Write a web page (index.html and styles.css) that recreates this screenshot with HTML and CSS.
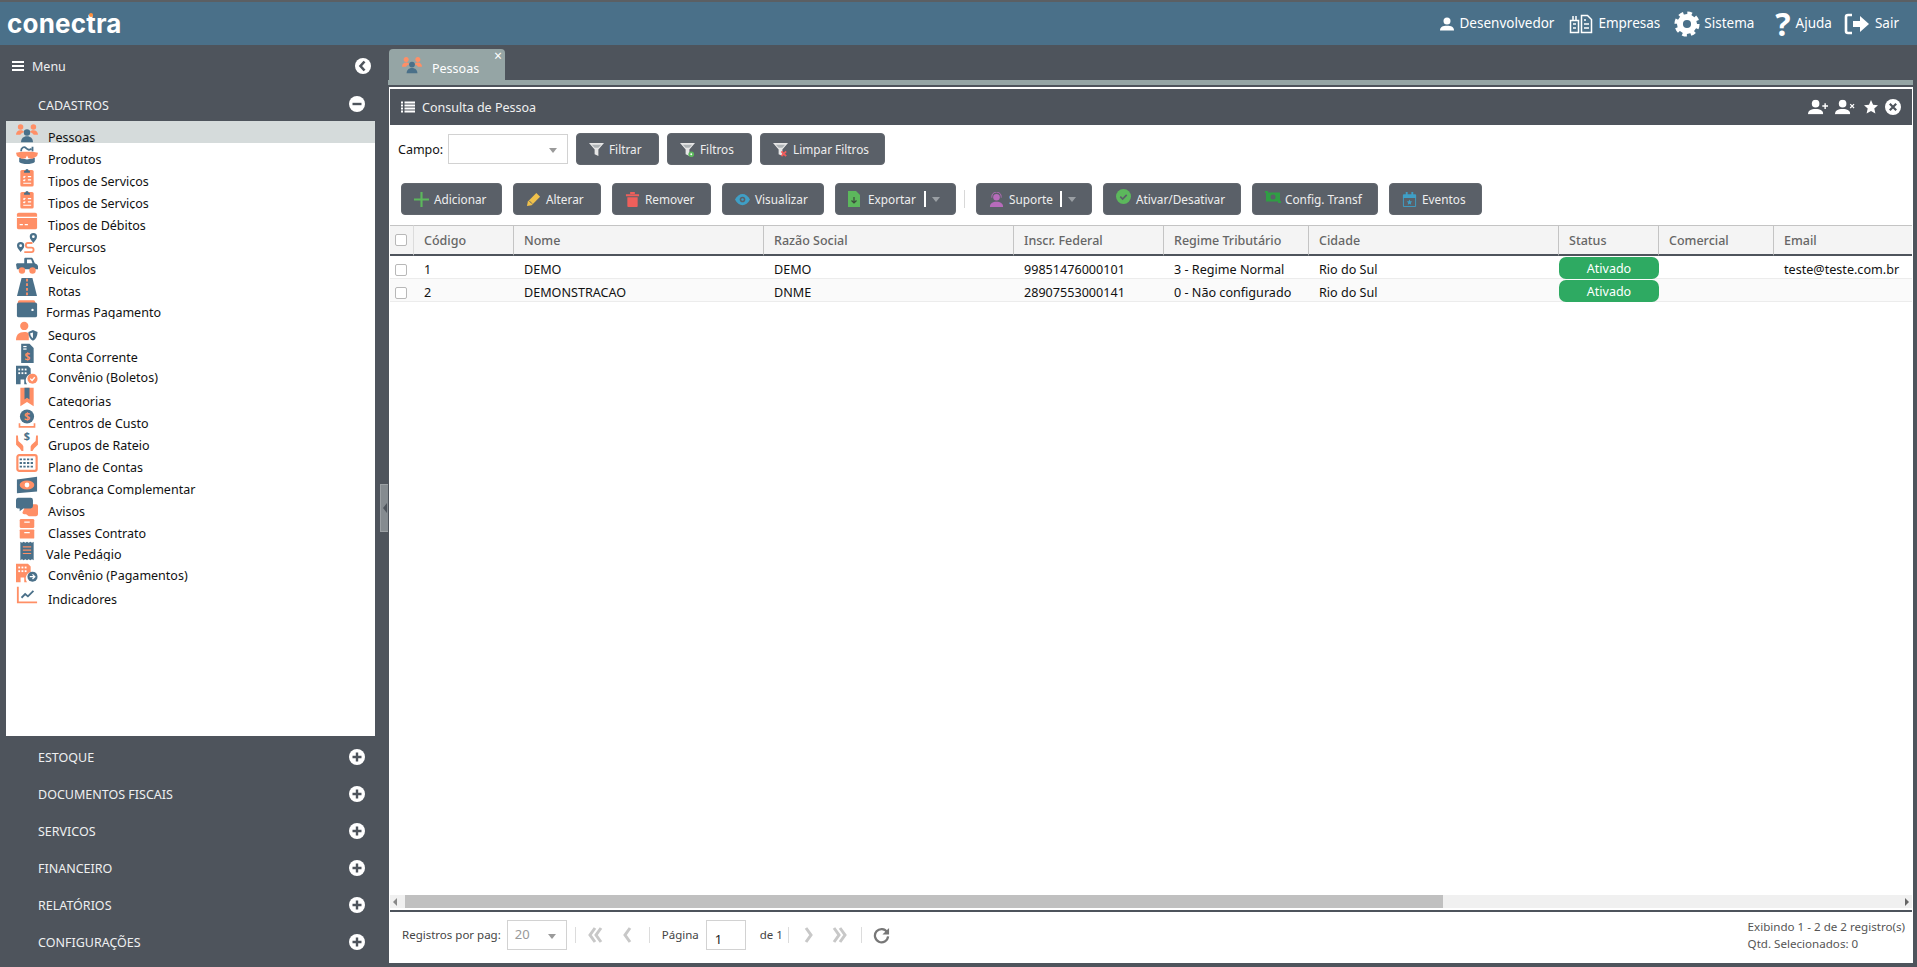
FILE: index.html
```html
<!DOCTYPE html>
<html lang="pt-BR">
<head>
<meta charset="utf-8">
<title>Conectra - Pessoas</title>
<link rel="stylesheet" href="styles.css">
</head>
<body>
<svg class="sprite" xmlns="http://www.w3.org/2000/svg">
  <symbol id="i-people" viewBox="0 0 24 20"><circle class="o" cx="5" cy="3.5" r="3"/><circle class="o" cx="19" cy="3.5" r="3"/><path class="o" d="M0 12c0-3 2-5 5-5 2 0 3 .6 4 2-2 .8-3.500 1.500-4.200 3zM24 12c0-3-2-5-5-5-2 0-3 .6-4 2 2 .8 3.500 1.500 4.200 3z"/><circle class="b" cx="12" cy="9.500" r="3.500"/><path class="b" d="M5.500 20c0-4 2.500-6.500 6.500-6.500s6.500 2.500 6.500 6.500z"/></symbol>
  <symbol id="i-box" viewBox="0 0 24 20"><path class="b" d="M3.500 13l8.500 2 8.500-2v4.500C17 20.500 7 20.500 3.500 17.500z"/><path class="o" d="M0 7.500l6-1h12l6 1-1 3.500-5 3-4.500-.5-1.500-3-1.500 3-4.500.5-5-3z"/><path class="st-b" d="M5.500 6C5.500 1.500 9 .5 11 2.500s4 2.500 6 .5"/><path class="st-b" d="M18 1v5"/></symbol>
  <symbol id="i-clip" viewBox="0 0 24 24"><rect class="o" x="4" y="3.500" width="16" height="20" rx="2"/><path class="b" d="M8.500 7V4.500h1.500a2 2 0 014 0h1.500V7z"/><path class="st-w" d="M7.500 11.500l1 1 1.500-1.500M13 11.500h4M7.500 15.500l1 1 1.500-1.500M13 15.500h4M7.500 19.500h9.500"/></symbol>
  <symbol id="i-card" viewBox="0 0 24 20"><rect class="o" x="1" y="1" width="22" height="18" rx="2"/><path class="st-w" d="M1 6h22M4 14h3.500M9.500 14H13"/></symbol>
  <symbol id="i-route" viewBox="0 0 24 22"><path class="b" d="M19 0a4 4 0 014 4c0 2.500-2.500 4.500-4 7-1.500-2.500-4-4.500-4-7a4 4 0 014-4z"/><circle class="w" cx="19" cy="4" r="1.500"/><path class="b" d="M5 10a4 4 0 014 4c0 2.500-2.500 4.500-4 7-1.500-2.500-4-4.500-4-7a4 4 0 014-4z"/><circle class="w" cx="5" cy="14" r="1.500"/><path class="st-o" d="M18 11h-5c-3 0-3 5 0 5h4c3 0 3 5 0 5H9"/></symbol>
  <symbol id="i-car" viewBox="0 0 24 20"><path class="b" d="M0 9.500l1-1.500h8V3.500C9 2.500 9.500 2 10.500 2h6c1 0 1.500.5 2 1.500L20.500 8l2.500 1.500 1 1.500v3.500H1z"/><path class="w" d="M12 4h4.500l1.500 4h-6z"/><circle class="o" cx="6.500" cy="16" r="3.500"/><circle class="o" cx="18" cy="16" r="3.500"/></symbol>
  <symbol id="i-road" viewBox="0 0 24 22"><path class="b" d="M6 1h12l5 20H1z"/><path class="st-o dash" d="M12 2v19"/></symbol>
  <symbol id="i-wallet" viewBox="0 0 24 20"><path class="o" d="M2 4V2.500A2 2 0 014 .5h15a2 2 0 012 2V4z"/><rect class="b" x="1" y="3" width="22" height="16" rx="2"/><circle class="w" cx="18" cy="11" r="1.300"/></symbol>
  <symbol id="i-shield" viewBox="0 0 24 20"><circle class="o" cx="9" cy="4.500" r="4.500"/><path class="o" d="M0 20c0-6 3-9 9-9 2 0 3.500.4 5 1.500V20z"/><path class="b" d="M13.500 11l5-2 5 2c0 5-2 8-5 9.500-3-1.500-5-4.500-5-9.500z"/><path class="w" d="M18.500 11.500v6.500c-1.500-1-3-3-3-5.500z"/></symbol>
  <symbol id="i-doc" viewBox="0 0 24 24"><path class="b" d="M5 1h10l5 5v18H5z"/><rect class="w" x="7.500" y="3.500" width="4" height="1.500"/><rect class="w" x="7.500" y="6.500" width="4" height="1.500"/><text class="glyph-o" x="12.500" y="20" text-anchor="middle">$</text></symbol>
  <symbol id="i-bldg-check" viewBox="0 0 24 20"><path class="b" d="M0 0h13l3 3v6a7 7 0 00-4 11H9v-5H5v5H0z"/><g class="w"><rect x="2.500" y="3" width="2" height="2"/><rect x="6" y="3" width="2" height="2"/><rect x="9.500" y="3" width="2" height="2"/><rect x="2.500" y="7" width="2" height="2"/><rect x="6" y="7" width="2" height="2"/><rect x="9.500" y="7" width="2" height="2"/></g><circle class="o" cx="18" cy="14" r="5.500"/><path class="st-w" d="M15.500 14l2 2 3-3.500"/></symbol>
  <symbol id="i-bookmark" viewBox="0 0 24 24"><path class="o" d="M4 1h16v22l-8-5-8 5z"/><path class="b" d="M9 1h6v14l-3-2-3 2z"/></symbol>
  <symbol id="i-coin" viewBox="0 0 24 24"><circle class="b" cx="12" cy="9" r="8.500"/><text class="glyph-o big" x="12" y="13.500" text-anchor="middle">$</text><path class="st-o" d="M3 17v4.500h18V17"/></symbol>
  <symbol id="i-hands" viewBox="0 0 24 22"><path class="o" d="M0 5l2 0 .5 6 4.500 4 1 2v5H6l-2-3-4-4zM24 5h-2l-.5 6-4.500 4-1 2v5h2l2-3 4-4z"/><text class="glyph-b" x="12" y="10" text-anchor="middle">$</text></symbol>
  <symbol id="i-abacus" viewBox="0 0 24 20"><rect class="st-o wide" x="1.500" y="1.500" width="21" height="17" rx="2"/><path class="st-b dots" d="M4 6h16M4 10h16M4 14h16"/></symbol>
  <symbol id="i-bill" viewBox="0 0 24 20"><path class="b" d="M1 4l22-3v16L1 19z"/><ellipse class="o" cx="12" cy="10" rx="8" ry="5"/><circle class="w" cx="12" cy="10" r="2.600"/></symbol>
  <symbol id="i-chat" viewBox="0 0 24 20"><path class="o" d="M11 7h11a2 2 0 012 2v9a2 2 0 01-2 2h-8l-3-2H9a2 2 0 01-2-2z"/><path class="b" d="M2 0h14a2.500 2.500 0 012.500 2.500V9a2.500 2.500 0 01-2.500 2.500H8L4 14.500v-3H2A2 2 0 010 9V2.500A2.500 2.500 0 012 0z"/></symbol>
  <symbol id="i-cabinet" viewBox="0 0 24 22"><rect class="o" x="4" y="0" width="16" height="10" rx="1.500"/><rect class="o" x="4" y="11.500" width="16" height="10" rx="1"/><path class="st-w" d="M9 3.500h6M9 15h6"/></symbol>
  <symbol id="i-receipt" viewBox="0 0 24 24"><path class="b" d="M4 1l2 1 2-1 2 1 2-1 2 1 2-1 2 1 2-1V23l-2-1-2 1-2-1-2 1-2-1-2 1-2-1-2 1z"/><path class="st-w thin" d="M7 7h10M7 11h10M7 15h10"/></symbol>
  <symbol id="i-bldg-arrow" viewBox="0 0 24 20"><path class="o" d="M0 0h13l3 3v6a7 7 0 00-4 11H9v-5H5v5H0z"/><g class="w"><rect x="2.500" y="3" width="2" height="2"/><rect x="6" y="3" width="2" height="2"/><rect x="9.500" y="3" width="2" height="2"/><rect x="2.500" y="7" width="2" height="2"/><rect x="6" y="7" width="2" height="2"/><rect x="9.500" y="7" width="2" height="2"/></g><circle class="b" cx="18" cy="14" r="5.500"/><path class="st-w" d="M15 14h5M18 11.500l2.500 2.500-2.500 2.500"/></symbol>
  <symbol id="i-chart" viewBox="0 0 24 20"><path class="st-o" d="M2 1v17h21"/><path class="st-b" d="M6 13l4-4 3 2.500 6-6"/></symbol>
  <symbol id="i-plus" viewBox="0 0 16 16"><circle cx="8" cy="8" r="8" fill="#fff"/><path d="M8 3.500v9M3.500 8h9" stroke="#4e545c" stroke-width="2.400"/></symbol>
  <symbol id="i-user" viewBox="0 0 16 16"><circle cx="8" cy="4.500" r="4" fill="currentColor"/><path d="M0 15.500c0-4 3-5.500 8-5.500s8 1.500 8 5.500z" fill="currentColor"/></symbol>
  <symbol id="i-funnel" viewBox="0 0 16 16"><path d="M0 1h16L10 8v7l-4-2V8z" fill="#e6e6e6"/><path d="M3 3h10l-3 3H6z" fill="#aeb3b6"/></symbol>
  <symbol id="i-first" viewBox="0 0 15 16"><path class="st-chev" d="M7 1L2 8l5 7M13 1L8 8l5 7"/></symbol>
  <symbol id="i-prev" viewBox="0 0 10 16"><path class="st-chev" d="M8 1L3 8l5 7"/></symbol>
  <symbol id="i-next" viewBox="0 0 10 16"><path class="st-chev" d="M2 1l5 7-5 7"/></symbol>
  <symbol id="i-last" viewBox="0 0 15 16"><path class="st-chev" d="M2 1l5 7-5 7M8 1l5 7-5 7"/></symbol>
</svg>

<header class="topbar">
  <div class="logo">conectra<span class="logo-dot"></span></div>
  <nav class="topnav">
    <a class="topnav-item"><svg class="ti ti-user"><use href="#i-user"/></svg>Desenvolvedor</a>
    <a class="topnav-item topnav-emp"><svg class="ti ti-bldg" viewBox="0 0 24 20"><path class="line-w" d="M1.500 6.500h8v12h-8zM4 6.500V2M7 6.500V2M12.500 18.500V1.500h6l4 4v13zM4 10h3M4 14h3M15 6h2M15 10h5M15 14h5"/></svg>Empresas</a>
    <a class="topnav-item topnav-sys"><svg class="ti ti-gear" viewBox="0 0 24 24"><circle cx="12" cy="12" r="6.500" class="gear-a"/><circle cx="12" cy="12" r="9.600" class="gear-b"/></svg>Sistema</a>
    <a class="topnav-item topnav-help"><span class="qmark">?</span>Ajuda</a>
    <a class="topnav-item topnav-exit"><svg class="ti ti-exit" viewBox="0 0 26 22"><path class="line-w2" d="M8 2H4a2 2 0 00-2 2v14a2 2 0 002 2h4"/><path d="M9 8h7V3l9 8-9 8v-5H9z" fill="#fff"/></svg>Sair</a>
  </nav>
</header>

<div class="app">
  <aside class="sidebar">
    <div class="side-head">
      <svg class="hamb" viewBox="0 0 12 10"><path d="M0 1h12M0 5h12M0 9h12" stroke="#fff" stroke-width="1.800"/></svg>
      <span class="side-title">Menu</span>
      <svg class="circ circ-back" viewBox="0 0 16 16"><circle cx="8" cy="8" r="8" fill="#fff"/><path d="M9.500 3.500L5.500 8l4 4.500" fill="none" stroke="#4e545c" stroke-width="2.600"/></svg>
    </div>
    <div class="sec sec-open"><span>CADASTROS</span><svg class="circ" viewBox="0 0 16 16"><circle cx="8" cy="8" r="8" fill="#fff"/><path d="M3.500 8h9" stroke="#4e545c" stroke-width="2.400"/></svg></div>
    <ul class="menu">
      <li class="mi mi-active"><svg class="mic"><use href="#i-people"/></svg><span>Pessoas</span></li>
      <li class="mi"><svg class="mic"><use href="#i-box"/></svg><span>Produtos</span></li>
      <li class="mi"><svg class="mic"><use href="#i-clip"/></svg><span>Tipos de Serviços</span></li>
      <li class="mi"><svg class="mic"><use href="#i-clip"/></svg><span>Tipos de Serviços</span></li>
      <li class="mi"><svg class="mic"><use href="#i-card"/></svg><span>Tipos de Débitos</span></li>
      <li class="mi"><svg class="mic"><use href="#i-route"/></svg><span>Percursos</span></li>
      <li class="mi"><svg class="mic"><use href="#i-car"/></svg><span>Veiculos</span></li>
      <li class="mi"><svg class="mic"><use href="#i-road"/></svg><span>Rotas</span></li>
      <li class="mi mi-mid"><svg class="mic"><use href="#i-wallet"/></svg><span class="mt-left">Formas Pagamento</span></li>
      <li class="mi"><svg class="mic"><use href="#i-shield"/></svg><span>Seguros</span></li>
      <li class="mi"><svg class="mic"><use href="#i-doc"/></svg><span>Conta Corrente</span></li>
      <li class="mi mi-up"><svg class="mic"><use href="#i-bldg-check"/></svg><span>Convênio (Boletos)</span></li>
      <li class="mi"><svg class="mic"><use href="#i-bookmark"/></svg><span>Categorias</span></li>
      <li class="mi"><svg class="mic"><use href="#i-coin"/></svg><span>Centros de Custo</span></li>
      <li class="mi"><svg class="mic"><use href="#i-hands"/></svg><span>Grupos de Rateio</span></li>
      <li class="mi"><svg class="mic"><use href="#i-abacus"/></svg><span>Plano de Contas</span></li>
      <li class="mi"><svg class="mic"><use href="#i-bill"/></svg><span>Cobrança Complementar</span></li>
      <li class="mi"><svg class="mic"><use href="#i-chat"/></svg><span>Avisos</span></li>
      <li class="mi"><svg class="mic"><use href="#i-cabinet"/></svg><span>Classes Contrato</span></li>
      <li class="mi mi-mid"><svg class="mic"><use href="#i-receipt"/></svg><span class="mt-left">Vale Pedágio</span></li>
      <li class="mi mi-up"><svg class="mic"><use href="#i-bldg-arrow"/></svg><span>Convênio (Pagamentos)</span></li>
      <li class="mi"><svg class="mic"><use href="#i-chart"/></svg><span>Indicadores</span></li>
    </ul>
    <div class="secs">
      <div class="sec"><span>ESTOQUE</span><svg class="circ"><use href="#i-plus"/></svg></div>
      <div class="sec"><span>DOCUMENTOS FISCAIS</span><svg class="circ"><use href="#i-plus"/></svg></div>
      <div class="sec"><span>SERVICOS</span><svg class="circ"><use href="#i-plus"/></svg></div>
      <div class="sec"><span>FINANCEIRO</span><svg class="circ"><use href="#i-plus"/></svg></div>
      <div class="sec"><span>RELATÓRIOS</span><svg class="circ"><use href="#i-plus"/></svg></div>
      <div class="sec"><span>CONFIGURAÇÕES</span><svg class="circ"><use href="#i-plus"/></svg></div>
    </div>
    <div class="splitter"><i class="split-arrow"></i></div>
  </aside>

  <main class="content">
    <div class="tabs">
      <div class="tab"><svg class="tab-ic"><use href="#i-people"/></svg><span>Pessoas</span><span class="tab-x">×</span></div>
    </div>
    <div class="tabline"></div>
    <section class="panel">
      <div class="ptitle">
        <svg class="plist" viewBox="0 0 14 12"><path d="M0 1.500h2M3.500 1.500H14M0 4.500h2M3.500 4.500H14M0 7.500h2M3.500 7.500H14M0 10.500h2M3.500 10.500H14" stroke="#fff" stroke-width="2"/></svg>
        <span class="ptitle-text">Consulta de Pessoa</span>
        <div class="pactions">
          <svg class="pa pa-user" viewBox="0 0 21 16"><g class="pa-w"><use href="#i-user" width="16" height="16"/></g><path d="M18 4v6M15 7h6" stroke="#fff" stroke-width="1.500"/></svg>
          <svg class="pa pa-user" viewBox="0 0 21 16"><g class="pa-w"><use href="#i-user" width="16" height="16"/></g><path d="M16 5l4 4M20 5l-4 4" stroke="#fff" stroke-width="1.300"/></svg>
          <svg class="pa pa-star" viewBox="0 0 14 14"><path d="M7 0l2.100 4.700 5 .5-3.800 3.300 1.100 5L7 11l-4.400 2.500 1.100-5L0 5.200l5-.5z" fill="#fff"/></svg>
          <svg class="pa pa-x" viewBox="0 0 16 16"><circle cx="8" cy="8" r="8" fill="#fff"/><path d="M4.800 4.800l6.400 6.400M11.200 4.800l-6.400 6.400" stroke="#4e545c" stroke-width="2.200"/></svg>
        </div>
      </div>

      <div class="filterbar">
        <label class="campo">Campo:</label>
        <div class="sel sel-campo"><i class="caret"></i></div>
        <button class="btn w-filtrar"><svg class="bi"><use href="#i-funnel"/></svg>Filtrar</button>
        <button class="btn w-filtros"><svg class="bi" viewBox="0 0 16 16"><use href="#i-funnel" width="16" height="16"/><circle cx="12" cy="13" r="3" fill="#5cb85c"/><circle cx="12" cy="13" r="1" fill="#fff"/></svg>Filtros</button>
        <button class="btn w-limpar"><svg class="bi" viewBox="0 0 16 16"><use href="#i-funnel" width="16" height="16"/><path d="M9 10l5 5M14 10l-5 5" stroke="#f25c5c" stroke-width="2"/></svg>Limpar Filtros</button>
      </div>

      <div class="actionbar">
        <button class="btn w-add"><svg class="bi" viewBox="0 0 14 14"><path d="M7 0v14M0 7h14" stroke="#5cb85c" stroke-width="2"/></svg>Adicionar</button>
        <button class="btn w-edit"><svg class="bi" viewBox="0 0 16 16"><path d="M11 1l4 4-9 9-5 1 1-5z" fill="#f0c14b"/><path d="M3.500 9.500l3 3" stroke="#5a6068"/></svg>Alterar</button>
        <button class="btn w-del"><svg class="bi" viewBox="0 0 14 16"><path d="M0 2.500h14v2H0zM4.500 0h5v2h-5z" fill="#ee5f5b"/><path d="M1.500 5.500h11V15a1 1 0 01-1 1h-9a1 1 0 01-1-1z" fill="#ee5f5b"/></svg>Remover</button>
        <button class="btn w-view"><svg class="bi" viewBox="0 0 16 12"><path d="M0 6c2-4 5-6 8-6s6 2 8 6c-2 4-5 6-8 6S2 10 0 6z" fill="#3f9fc6"/><circle cx="8" cy="6" r="3" fill="#5a6068"/><circle cx="8" cy="6" r="1.300" fill="#3f9fc6"/></svg>Visualizar</button>
        <button class="btn w-exp"><svg class="bi bi-doc" viewBox="0 0 12 16"><path d="M0 0h8l4 4v12H0z" fill="#5cb85c"/><path d="M6 6v6M3.500 9.500L6 12l2.500-2.500" stroke="#3c4a3c" fill="none" stroke-width="1.200"/></svg><span>Exportar</span><i class="bsep"></i><i class="caret caret-b"></i></button>
        <i class="vsep"></i>
        <button class="btn w-sup"><svg class="bi" viewBox="0 0 14 16"><circle cx="7" cy="5.500" r="3.500" fill="#b76bbb"/><path d="M2 6V5a5 5 0 0110 0v1" fill="none" stroke="#b76bbb"/><path d="M0 16c0-4 3-5.500 7-5.500s7 1.500 7 5.500z" fill="#b76bbb"/></svg><span>Suporte</span><i class="bsep"></i><i class="caret caret-b"></i></button>
        <button class="btn w-atv"><svg class="bi bi-up" viewBox="0 0 14 14"><circle cx="7" cy="7" r="7" fill="#5cb85c"/><path d="M4 7.200l2.200 2.200L10 5.500" fill="none" stroke="#5a6068" stroke-width="1.600"/></svg>Ativar/Desativar</button>
        <button class="btn w-cfg"><svg class="bi bi-wide bi-up" viewBox="0 0 16 12"><path d="M1 1.500h14v9H1z" fill="#2f9e44"/><circle cx="8" cy="6" r="2.500" fill="#5a6068"/><path d="M0 0h3v2H0zM13 10h3v2h-3z" fill="#2f9e44"/></svg>Config. Transf</button>
        <button class="btn w-evt"><svg class="bi" viewBox="0 0 14 16"><path d="M.5 3h13v12.500H.5z" fill="none" stroke="#3f9fc6"/><path d="M0 3h14v3.500H0zM3 0h2v3H3zM9 0h2v3H9z" fill="#3f9fc6"/><path d="M7 8l.9 1.900 2 .2-1.500 1.400.4 2L7 12.500l-1.800 1 .4-2-1.500-1.400 2-.2z" fill="#3f9fc6"/></svg>Eventos</button>
      </div>

      <div class="gridwrap">
        <table class="grid">
          <colgroup><col class="c0"><col class="c1"><col class="c2"><col class="c3"><col class="c4"><col class="c5"><col class="c6"><col class="c7"><col class="c8"><col class="c9"><col class="c10"></colgroup>
          <thead>
            <tr><th><i class="cb"></i></th><th>Código</th><th>Nome</th><th>Razão Social</th><th>Inscr. Federal</th><th>Regime Tributário</th><th>Cidade</th><th>Status</th><th>Comercial</th><th>Email</th><th></th></tr>
          </thead>
          <tbody>
            <tr><td><i class="cb"></i></td><td>1</td><td>DEMO</td><td>DEMO</td><td>99851476000101</td><td>3 - Regime Normal</td><td>Rio do Sul</td><td class="stc"><span class="pill">Ativado</span></td><td></td><td>teste@teste.com.br</td><td></td></tr>
            <tr class="alt"><td><i class="cb"></i></td><td>2</td><td>DEMONSTRACAO</td><td>DNME</td><td>28907553000141</td><td>0 - Não configurado</td><td>Rio do Sul</td><td class="stc"><span class="pill">Ativado</span></td><td></td><td></td><td></td></tr>
          </tbody>
        </table>
      </div>

      <div class="hscroll"><i class="arr arr-l"></i><div class="thumb"></div><i class="arr arr-r"></i></div>

      <footer class="pager">
        <span class="pg-label">Registros por pag:</span>
        <div class="sel sel-pg"><span>20</span><i class="caret"></i></div>
        <i class="psep psep-a"></i>
        <svg class="chev chev-first"><use href="#i-first"/></svg>
        <svg class="chev chev-prev"><use href="#i-prev"/></svg>
        <i class="psep psep-b"></i>
        <span class="pg-label pg-pagina">Página</span>
        <div class="pg-input">1</div>
        <span class="pg-label pg-de">de 1</span>
        <i class="psep psep-c"></i>
        <svg class="chev chev-next"><use href="#i-next"/></svg>
        <svg class="chev chev-last"><use href="#i-last"/></svg>
        <i class="psep psep-d"></i>
        <svg class="refresh" viewBox="0 0 18 18"><path d="M15 5.500A7 7 0 1016 10" fill="none" stroke="#777" stroke-width="2.400"/><path d="M17 1v7h-7z" fill="#777"/></svg>
        <div class="pg-info"><div>Exibindo 1 - 2 de 2 registro(s)</div><div>Qtd. Selecionados: 0</div></div>
      </footer>
    </section>
  </main>
</div>
</body>
</html>
```
FILE: styles.css
```css
* { box-sizing: border-box; }
html, body { margin: 0; height: 100%; }
body {
  width: 1917px; height: 967px; overflow: hidden;
  background: #4e545c; color: #111;
  font: 12.500px/1.2 "Noto Sans", "Liberation Sans", sans-serif;
}
ul { list-style: none; margin: 0; padding: 0; }
i { display: block; font-style: normal; }
.sprite { display: none; }

/* sprite colours */
.o { fill: #ff8f66; }
.b { fill: #4a7089; }
.w { fill: #fff; }
.st-o { fill: none; stroke: #ff8f66; stroke-width: 2; }
.st-b { fill: none; stroke: #4a7089; stroke-width: 2; }
.st-w { fill: none; stroke: #fff; stroke-width: 1.400; }
.st-w.thin { stroke: #ff8f66; }
.st-o.dash { stroke-dasharray: 3 2; }
.st-o.wide { stroke-width: 2.400; }
.st-b.dots { stroke-dasharray: 2.500 1.500; stroke-width: 2; }
.st-chev { fill: none; stroke: #c8c8c8; stroke-width: 3; }
.glyph-o, .glyph-b { font: 700 12px "Noto Sans", sans-serif; }
.glyph-o { fill: #ff8f66; }
.glyph-b { fill: #4a7089; }
.glyph-o.big { font-size: 13px; }

/* top bar */
.topbar {
  height: 45px; display: flex; align-items: center; justify-content: space-between;
  background: #4a7089; border-top: 2px solid #5b5f63;
  padding: 0 18px 0 7px; color: #fff;
}
.logo {
  position: relative; font: 700 26px/1 "Inter", sans-serif; letter-spacing: 0.2px;
  color: #fff;
}
.logo-dot {
  position: absolute; left: 82px; top: 2px; width: 4px; height: 4px;
  border-radius: 50%; background: #ff8f3c;
}
.topnav { display: flex; align-items: center; }
.topnav-item {
  display: flex; align-items: center; color: #fff; font-size: 13.500px;
  margin-left: 15px;
}
.topnav-emp { margin-left: 15px; }
.topnav-sys { margin-left: 14px; }
.topnav-help { margin-left: 21px; }
.topnav-exit { margin-left: 12px; }
.ti { display: block; margin-right: 5px; }
.ti-user { width: 14px; height: 14px; margin-right: 6px; color: #fff; }
.ti-bldg { width: 24px; height: 20px; }
.ti-gear { width: 26px; height: 26px; margin-right: 4px; }
.ti-exit { width: 26px; height: 24px; }
.line-w { fill: none; stroke: #fff; stroke-width: 1.500; }
.line-w2 { fill: none; stroke: #fff; stroke-width: 2.600; }
.gear-a { fill: none; stroke: #fff; stroke-width: 5.500; }
.gear-b { fill: none; stroke: #fff; stroke-width: 4; stroke-dasharray: 4.100 3.440; }
.qmark { font: 700 32px/24px "Noto Sans", sans-serif; margin-right: 5px; color: #fff; }

/* layout */
.app { display: flex; height: 922px; }

/* sidebar */
.sidebar { position: relative; flex: 0 0 388px; color: #fff; display: flex; flex-direction: column; }
.side-head { height: 42px; display: flex; align-items: center; padding: 0 17px 0 12px; }
.hamb { width: 12px; height: 10px; margin-right: 8px; }
.side-title { flex: 1; color: #eef0f1; }
.circ { display: block; width: 16px; height: 16px; flex: none; }
.sec {
  height: 37px; display: flex; align-items: center; justify-content: space-between;
  padding: 0 23px 0 38px; color: #eef0f1; font-size: 12.500px;
}
.sec span { padding-top: 1px; }
.sec-open { height: 34px; }
.sec-open span { padding-top: 2px; }
.menu {
  width: 369px; height: 615px; margin-left: 6px; background: #fff;
  color: #111; flex: none;
}
.mi {
  height: 22px; overflow: hidden; display: flex; align-items: flex-start;
  line-height: 18px; padding-left: 10px;
}
.mi span { padding-top: 8px; margin-left: 10px; line-height: 18px; }
.mi-active { background: #d5dbdb; }
.mic { display: block; flex: none; width: 22px; height: 20px; margin-top: 2px; }
.mi-up span { padding-top: 6px; }
.mi-mid span { padding-top: 7px; }
.mi span.mt-left { margin-left: 8px; }
.secs { padding-top: 2px; }
.splitter {
  position: absolute; left: 380px; top: 439px; width: 8px; height: 48px;
  background: #858b90; border: 1px solid #9ba0a4; border-right: 0;
  display: flex; align-items: center; justify-content: center;
}
.split-arrow {
  width: 0; height: 0; border: 4px solid transparent; border-left: 0;
  border-right: 4px solid #4e545c; border-top-width: 5px; border-bottom-width: 5px;
}

/* main */
.content { flex: 1; display: flex; flex-direction: column; padding-top: 4px; min-width: 0; }
.tabs { height: 31px; display: flex; padding-left: 1px; }
.tab {
  position: relative; width: 116px; height: 31px; display: flex; align-items: center;
  background: #95a5a5; border-radius: 4px 4px 0 0; color: #fff; padding: 8px 0 0 13px;
}
.tab-ic { display: block; width: 20px; height: 18px; margin: -7px 10px 0 0; }
.tab-x { position: absolute; right: 3px; top: 0; font-size: 14px; line-height: 14px; color: #fff; }
.tabline { height: 5px; width: 1525px; background: #95a5a5; flex: none; }
.panel {
  width: 1524px; height: 876px; margin: 2px 0 0 1px; background: #fff;
  padding: 2px 1px 0; display: flex; flex-direction: column;
}
.ptitle {
  flex: none; height: 36px; background: #4e545c; color: #f0f0f0; display: flex;
  align-items: center; padding: 0 11px;
}
.plist { width: 14px; height: 12px; margin-right: 7px; }
.ptitle-text { flex: 1; }
.pactions { display: flex; align-items: center; }
.pa { display: block; height: 16px; }
.pa-user { width: 20px; margin-right: 7px; color: #fff; }
.pa-star { width: 14px; height: 14px; margin: 0 7px 0 2px; }
.pa-x { width: 16px; }

.filterbar { flex: none; display: flex; align-items: center; height: 32px; margin-top: 8px; padding-left: 8px; }
.campo { flex: 0 0 50px; color: #111; }
.sel { position: relative; height: 30px; background: #fff; border: 1px solid #d2d2d2; }
.sel-campo { width: 120px; margin-right: 8px; }
.caret { width: 0; height: 0; border: 4px solid transparent; border-top: 5px solid #9a9a9a; border-bottom: 0; }
.sel .caret { position: absolute; right: 10px; top: 13px; }
.btn {
  display: flex; align-items: center; height: 32px; padding: 0 0 0 12px;
  background: #5a6068; color: #eee; border: 1px solid #62676e; border-radius: 4px;
  font: 11.800px "Noto Sans", sans-serif; white-space: nowrap; flex: none;
}
.filterbar .btn { margin-right: 8px; }
.bi { display: block; flex: none; width: 15px; height: 15px; margin-right: 5px; }
.bi-doc { width: 12px; height: 16px; margin-right: 8px; }
.bi-wide { width: 16px; height: 12px; margin-right: 4px; }
.bi-up { margin-top: -5px; }
.w-filtrar { width: 83px; } .w-filtros { width: 85px; }
.w-limpar { width: 125px; }
.actionbar { flex: none; display: flex; align-items: center; gap: 11px; height: 32px; margin-top: 18px; padding-left: 11px; }
.w-add { width: 101px; } .w-edit { width: 88px; } .w-del { width: 99px; } .w-view { width: 102px; }
.w-exp { width: 121px; padding-right: 15px; } .w-sup { width: 116px; padding-right: 15px; }
.w-atv { width: 138px; } .w-cfg { width: 126px; } .w-evt { width: 93px; }
.bsep { width: 2px; height: 16px; background: #fff; margin: 0 6px 0 auto; }
.caret-b { border-top-color: #9a9fa4; }
.vsep { width: 1px; height: 18px; background: #d8d8d8; margin: 0 0 0 -3px; }

.gridwrap { flex: 1; margin-top: 10px; overflow: hidden; min-height: 0; }
.grid { border-collapse: separate; border-spacing: 0; table-layout: fixed; width: 2923px; }
.c0 { width: 24px; } .c1 { width: 100px; } .c2 { width: 250px; } .c3 { width: 250px; }
.c4 { width: 150px; } .c5 { width: 145px; } .c6 { width: 250px; } .c7 { width: 100px; }
.c8 { width: 115px; } .c9 { width: 160px; } .c10 { width: 1379px; }
.grid th {
  height: 31px; padding: 0 0 0 10px; text-align: left; font-weight: 500; color: #666;
  background: #f4f4f4; border-top: 1px solid #c4c4c4; border-right: 1px solid #c4c4c4;
  border-bottom: 2px solid #4e545c; font-size: 12.500px; white-space: nowrap;
}
.grid td {
  height: 23px; padding: 5px 0 0 10px; border-bottom: 1px solid #ececec; color: #111;
  font-size: 12.600px; line-height: 17px; white-space: nowrap; overflow: hidden;
}
.grid th:first-child, .grid td:first-child { padding-left: 5px; }
.grid th:first-child { border-right-color: #dcdcdc; }
.alt td { background: #fafafa; }
.cb { width: 12px; height: 12px; background: #fff; border: 1px solid #b8b8b8; border-radius: 2px; }
.grid td.stc { padding: 1px 0 0; overflow: visible; }
.pill {
  display: block; width: 100px; height: 22px; margin-bottom: -1px; line-height: 23px; text-align: center;
  background: #2eaa62; color: #fff; border-radius: 7px; font-size: 12.500px;
}

.hscroll { flex: none; height: 13px; background: #f0f0f0; display: flex; align-items: center; position: relative; }
.thumb { position: absolute; left: 15px; top: 0; width: 1038px; height: 13px; background: #c0c0c0; }
.arr { position: absolute; width: 0; height: 0; border: 4px solid transparent; }
.arr-l { left: 3px; border-left: 0; border-right: 4px solid #888; }
.arr-r { right: 3px; border-right: 0; border-left: 4px solid #666; }

.pager {
  flex: none; height: 53px; margin-top: 2px; border-top: 2px solid #4e545c; display: flex;
  align-items: center; padding: 0 7px 5px 12px; color: #444;
}
.pg-label { font-size: 11.500px; color: #444; }
.sel-pg { flex: none; width: 60px; margin-left: 6px; display: flex; align-items: center; padding-left: 7px; color: #999; font-size: 13px; }
.psep { flex: none; width: 1px; height: 16px; background: #dcdcdc; }
.psep-a { margin-left: 8px; }
.psep-b { margin-left: 17px; }
.psep-c { margin-left: 5px; }
.psep-d { margin-left: 14px; }
.chev { display: block; flex: none; height: 16px; }
.chev-first { width: 15px; margin-left: 12px; }
.chev-prev { width: 10px; margin-left: 19px; }
.chev-next { width: 10px; margin-left: 15px; }
.chev-last { width: 15px; margin-left: 18px; }
.pg-pagina { margin-left: 12px; }
.pg-input { flex: none; width: 40px; height: 30px; margin-left: 7px; border: 1px solid #d2d2d2; padding: 9px 0 0 8px; color: #222; font-size: 13px; line-height: 18px; }
.pg-de { margin-left: 14px; }
.refresh { width: 17px; height: 17px; display: block; flex: none; margin-left: 11px; }
.pg-info { margin-left: auto; font-size: 11.600px; line-height: 17px; color: #555; }
```
